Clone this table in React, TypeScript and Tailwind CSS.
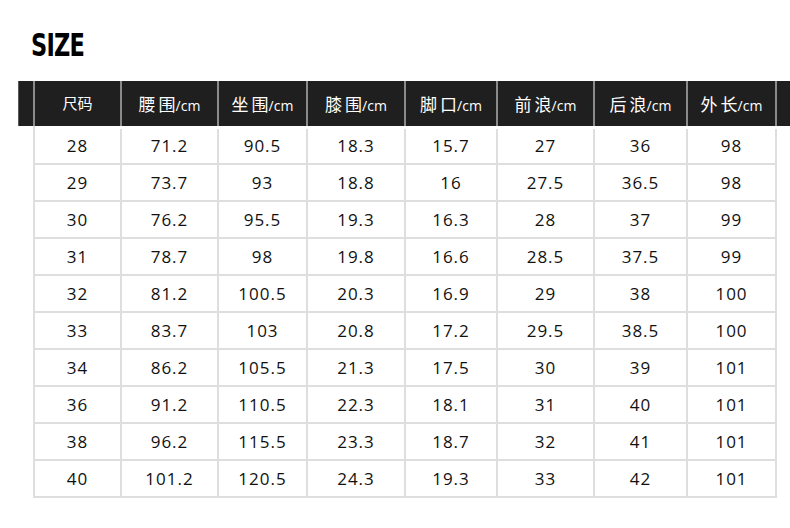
const columns = ["尺码", "腰围", "坐围", "膝围", "脚口", "前浪", "后浪", "外长"];

const rows = [
  ["28", "71.2", "90.5", "18.3", "15.7", "27", "36", "98"],
  ["29", "73.7", "93", "18.8", "16", "27.5", "36.5", "98"],
  ["30", "76.2", "95.5", "19.3", "16.3", "28", "37", "99"],
  ["31", "78.7", "98", "19.8", "16.6", "28.5", "37.5", "99"],
  ["32", "81.2", "100.5", "20.3", "16.9", "29", "38", "100"],
  ["33", "83.7", "103", "20.8", "17.2", "29.5", "38.5", "100"],
  ["34", "86.2", "105.5", "21.3", "17.5", "30", "39", "101"],
  ["36", "91.2", "110.5", "22.3", "18.1", "31", "40", "101"],
  ["38", "96.2", "115.5", "23.3", "18.7", "32", "41", "101"],
  ["40", "101.2", "120.5", "24.3", "19.3", "33", "42", "101"],
];

const widths = ["w-[87px]", "w-[97px]", "w-[89px]", "w-[98px]", "w-[92px]", "w-[97px]", "w-[93px]", "w-[89px]"];

export default function App() {
  return (
    <div className="w-[790px] h-[528px] bg-white overflow-hidden font-['Open_Sans','Noto_Sans_CJK_SC',sans-serif]">
      <div className="pt-[29px] pl-[31px] h-[81px]">
        <span className="inline-block origin-left scale-x-[0.78] font-['DejaVu_Sans_Condensed',sans-serif] font-black text-[32px] leading-[32px] tracking-[-1px] text-black">
          SIZE
        </span>
      </div>

      <div className="ml-[18px] flex h-[45px] bg-[#1f1f1f] border-l border-[#5a5a5a]">
        <div className="w-[14px]" />
        {columns.map((c, i) => (
          <div
            key={c}
            className={`${widths[i]} flex items-center justify-center border-l-2 border-[#8a8a8a] text-white`}
          >
            {i === 0 ? (
              <span className="font-['Noto_Sans_CJK_SC',sans-serif] text-[15px]">{c}</span>
            ) : (
              <span className="font-['Noto_Sans_CJK_SC',sans-serif] text-[17px]">
                <span className="mr-[3px]">{c[0]}</span>
                {c[1]}
                <span className="text-[14px] font-['Open_Sans',sans-serif]">/cm</span>
              </span>
            )}
          </div>
        ))}
        <div className="flex-1 border-l-2 border-[#8a8a8a]" />
      </div>

      <div className="ml-[33px] w-[744px] border-l-2 border-[#dedede]">
        {rows.map((r, ri) => (
          <div
            key={r[0]}
            className={`flex border-b-2 border-[#dedede] ${ri === 0 ? "h-[39px] pt-[3px]" : "h-[37px]"}`}
          >
            {r.map((v, i) => (
              <div
                key={i}
                className={`${widths[i]} flex items-center justify-center border-r-2 border-[#dedede] text-[17px] tracking-[1px] text-[#111]`}
              >
                {v}
              </div>
            ))}
          </div>
        ))}
      </div>
    </div>
  );
}
